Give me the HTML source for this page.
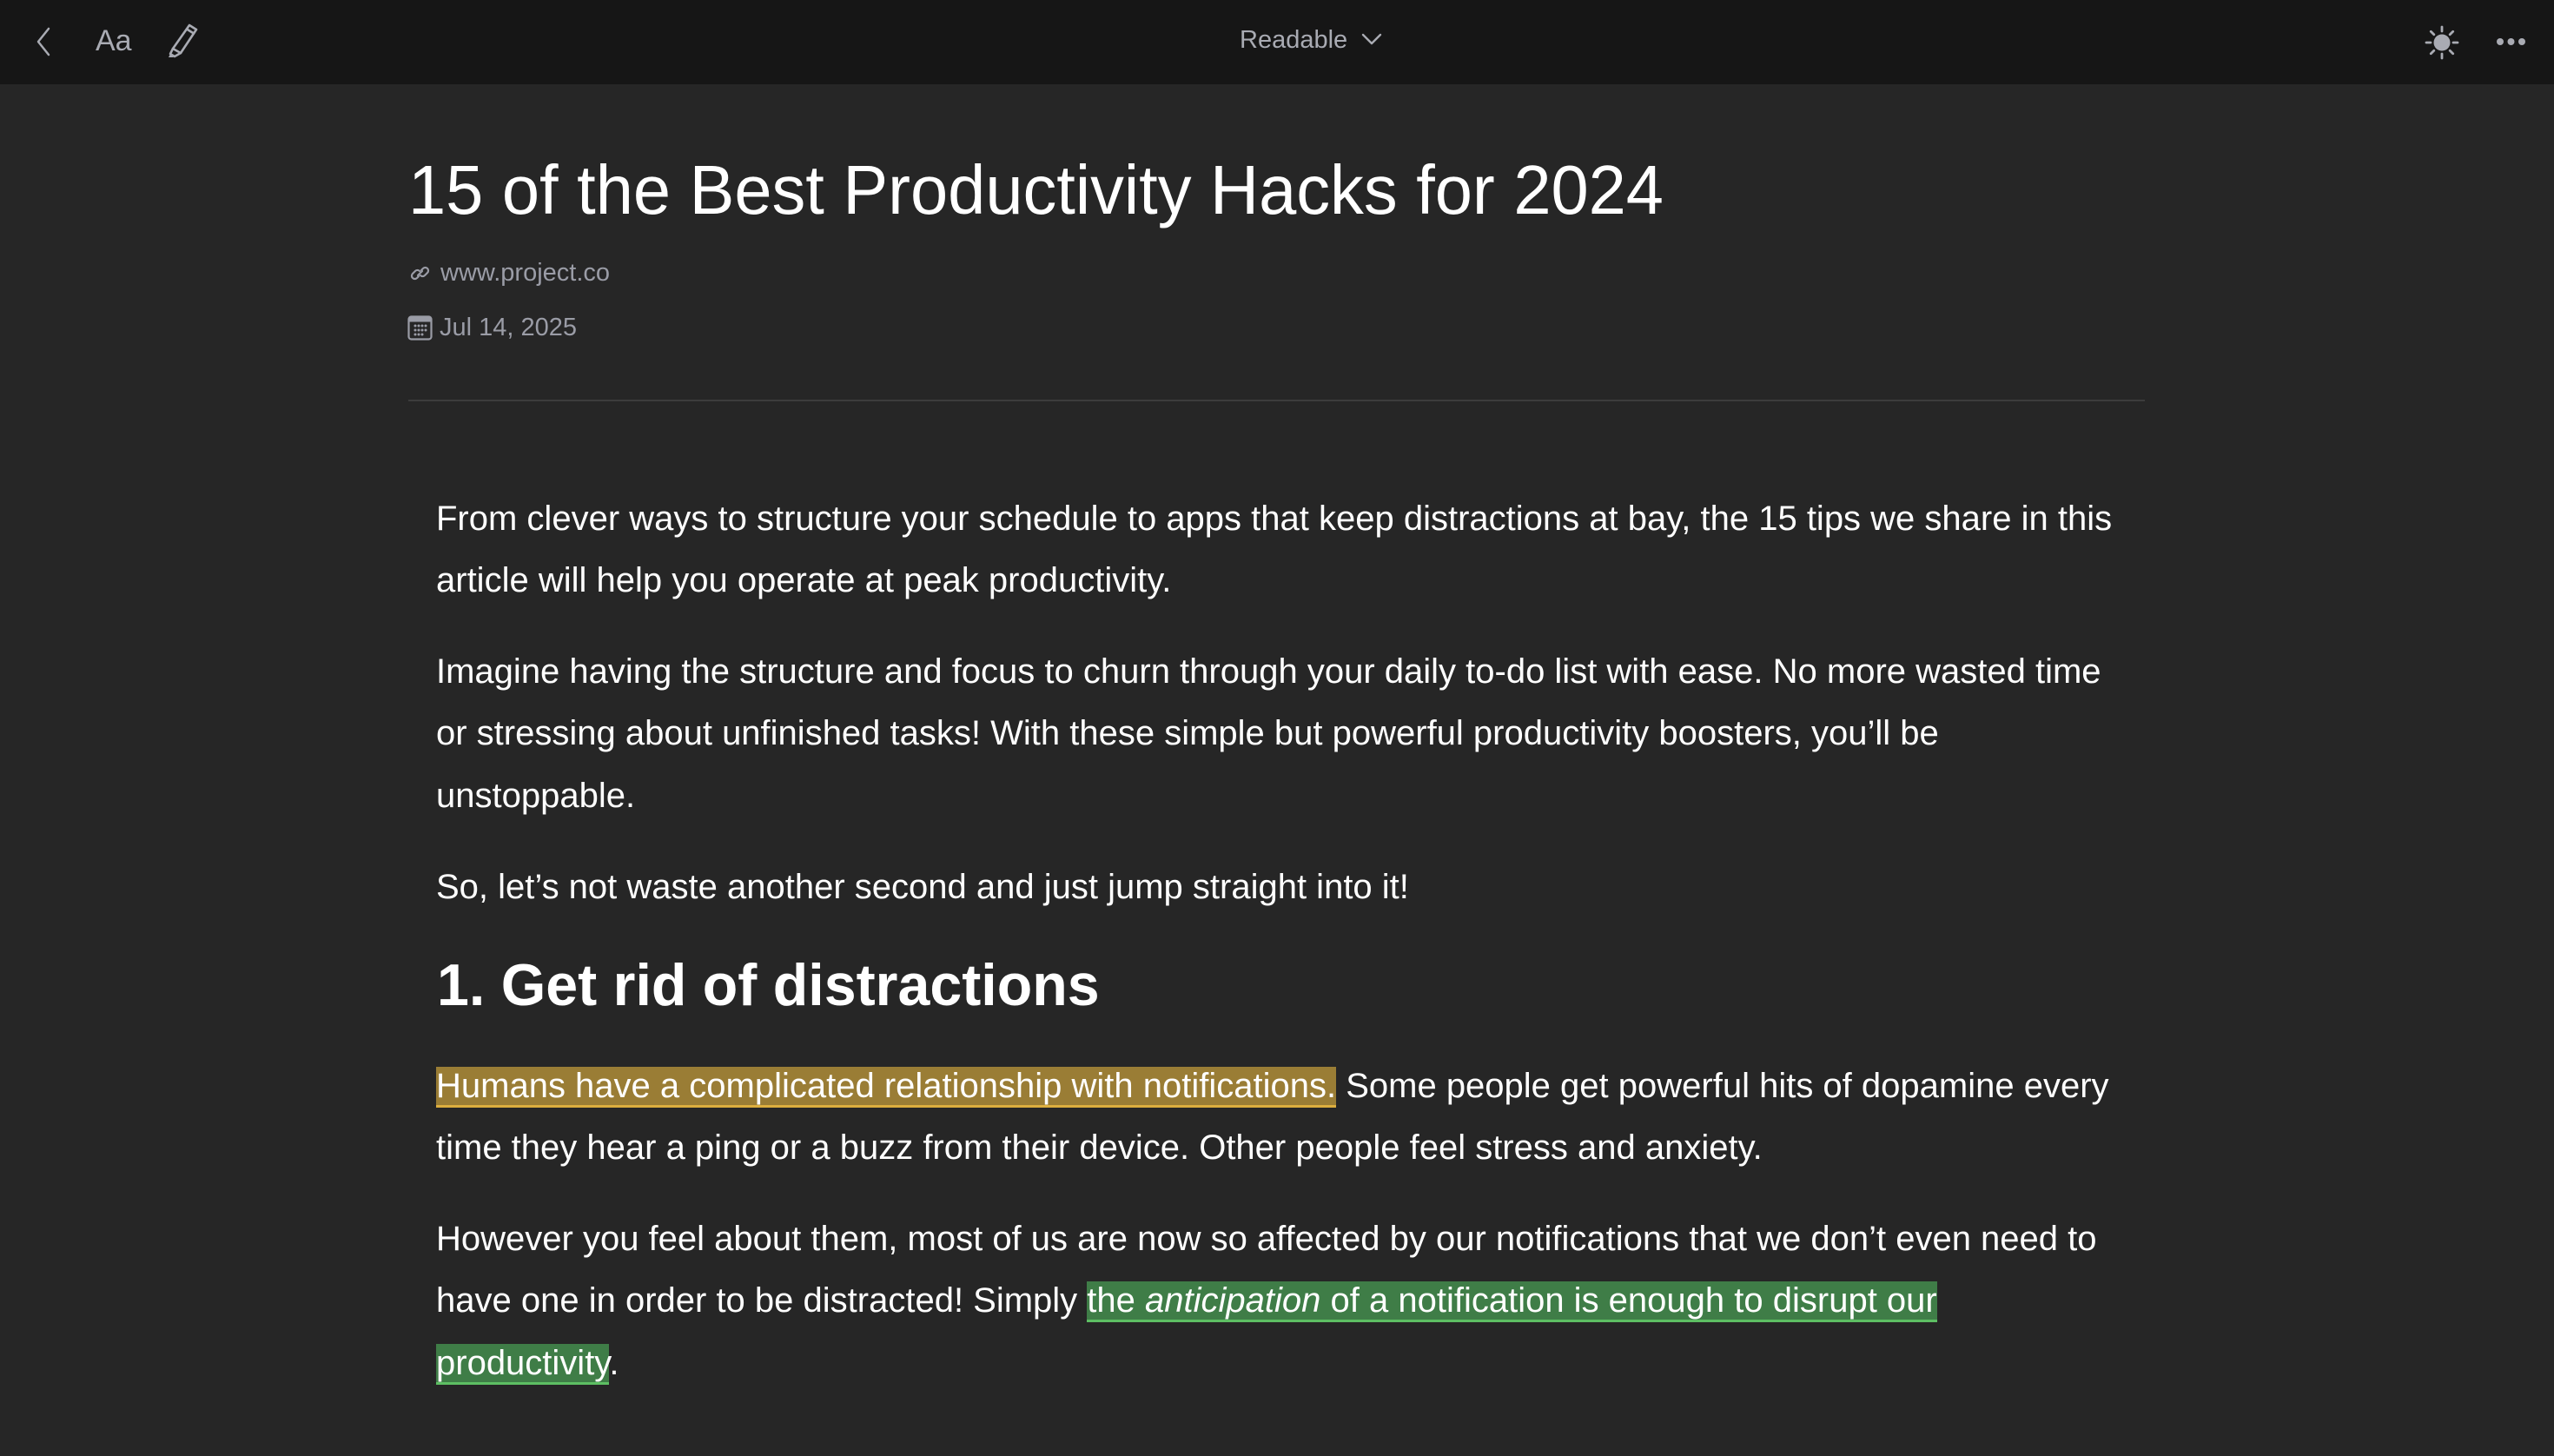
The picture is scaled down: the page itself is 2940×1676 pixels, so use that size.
<!DOCTYPE html>
<html><head><meta charset="utf-8"><style>
*{margin:0;padding:0;box-sizing:border-box}
html,body{width:2940px;height:1676px;overflow:hidden;background:#262626;font-family:"Liberation Sans",Arial,sans-serif;color:#fff}
.bar{position:absolute;left:0;top:0;width:2940px;height:97px;background:#161616}
.a{position:absolute;white-space:nowrap}
.p{position:absolute;left:502px;font-size:40px;line-height:71.25px;white-space:nowrap;color:#fff}
.hy{background:#9a7d35;border-bottom:3px solid #dcae3e}
.hg{background:#3f7d47;border-bottom:3px solid #5dbf63}
</style></head><body>
<div class="bar"></div>
<svg class="a" style="left:38px;top:30px" width="24" height="36" viewBox="0 0 24 36"><path d="M18 3 L6 18 L18 33" fill="none" stroke="#a9abb3" stroke-width="2.5" stroke-linecap="round" stroke-linejoin="round"/></svg>
<div class="a" style="left:110px;top:27px;font-size:34px;line-height:40px;color:#a9abb3">Aa</div>
<svg class="a" style="left:186px;top:24px" width="46" height="46" viewBox="0 0 46 46"><g fill="none" stroke="#a9abb3" stroke-width="2.6" stroke-linejoin="round" stroke-linecap="round"><path d="M32 5 L40 10 L22 37 L13 32 Z"/><path d="M29 9.5 L37 14.5"/><path d="M13 32 L10 38 L15 41 L22 37"/></g><path d="M10 38 L8 42 L13 42 L15 41 Z" fill="#a9abb3"/></svg>
<div class="a" style="left:1427px;top:30px;font-size:29px;line-height:32px;color:#a9abb3">Readable</div>
<svg class="a" style="left:1566px;top:36px" width="26" height="18" viewBox="0 0 26 18"><path d="M3 4 L13 14 L23 4" fill="none" stroke="#a9abb3" stroke-width="2.4" stroke-linecap="round" stroke-linejoin="round"/></svg>
<svg class="a" style="left:2789px;top:27px" width="44" height="44" viewBox="0 0 44 44"><circle cx="22" cy="22" r="9.5" fill="#a9abb3"/><g stroke="#a9abb3" stroke-width="2.8" stroke-linecap="round"><path d="M22 4v5M22 35v5M4 22h5M35 22h5M9.3 9.3l3.5 3.5M31.2 31.2l3.5 3.5M9.3 34.7l3.5-3.5M31.2 12.8l3.5-3.5"/></g></svg>
<svg class="a" style="left:2872px;top:38px" width="40" height="20" viewBox="0 0 40 20"><g fill="#a9abb3"><circle cx="6" cy="10" r="4"/><circle cx="18.5" cy="10" r="4"/><circle cx="31" cy="10" r="4"/></g></svg>

<div class="a" style="left:470px;top:179px;font-size:80px;line-height:80px;transform:scaleX(0.97);transform-origin:left top">15 of the Best Productivity Hacks for 2024</div>

<svg class="a" style="left:472px;top:304px" width="24" height="22" viewBox="0 0 24 22"><g fill="none" stroke="#9a9ca6" stroke-width="2.2" stroke-linecap="round"><path d="M10 14 L8 16 a3.5 3.5 0 0 1 -5 -5 L6 8 a3.5 3.5 0 0 1 5 0"/><path d="M13 7 L15 5 a3.5 3.5 0 0 1 5 5 L17 13 a3.5 3.5 0 0 1 -5 0"/><path d="M9 13 L14 8"/></g></svg>
<div class="a" style="left:507px;top:300px;font-size:29px;line-height:29px;color:#9a9ca6">www.project.co</div>
<svg class="a" style="left:469px;top:363px" width="30" height="29" viewBox="0 0 30 29"><rect x="1.5" y="1.5" width="26" height="26" rx="3" fill="none" stroke="#9a9ca6" stroke-width="2.2"/><rect x="1.5" y="1.5" width="26" height="6" fill="#9a9ca6"/><g fill="#9a9ca6"><circle cx="9" cy="12" r="1.5"/><circle cx="13" cy="12" r="1.5"/><circle cx="17" cy="12" r="1.5"/><circle cx="21" cy="12" r="1.5"/><circle cx="9" cy="17" r="1.5"/><circle cx="13" cy="17" r="1.5"/><circle cx="17" cy="17" r="1.5"/><circle cx="21" cy="17" r="1.5"/><circle cx="9" cy="22" r="1.5"/><circle cx="13" cy="22" r="1.5"/><circle cx="17" cy="22" r="1.5"/></g></svg>
<div class="a" style="left:506px;top:363px;font-size:29px;line-height:29px;color:#9a9ca6">Jul 14, 2025</div>

<div class="a" style="left:470px;top:460px;width:1999px;height:2px;background:#3c3c3c"></div>

<div class="p" style="top:562px">From clever ways to structure your schedule to apps that keep distractions at bay, the 15 tips we share in this<br>article will help you operate at peak productivity.</div>
<div class="p" style="top:738px">Imagine having the structure and focus to churn through your daily to-do list with ease. No more wasted time<br>or stressing about unfinished tasks! With these simple but powerful productivity boosters, you’ll be<br>unstoppable.</div>
<div class="p" style="top:986px">So, let’s not waste another second and just jump straight into it!</div>
<div class="a" style="left:503px;top:1100px;font-size:68px;line-height:68px;font-weight:bold;transform:scaleX(0.975);transform-origin:left top">1. Get rid of distractions</div>
<div class="p" style="top:1215px"><span class="hy">Humans have a complicated relationship with notifications.</span> Some people get powerful hits of dopamine every<br>time they hear a ping or a buzz from their device. Other people feel stress and anxiety.</div>
<div class="p" style="top:1391px">However you feel about them, most of us are now so affected by our notifications that we don’t even need to<br>have one in order to be distracted! Simply <span class="hg">the <i>anticipation</i> of a notification is enough to disrupt our</span><br><span class="hg">productivity</span>.</div>
</body></html>
